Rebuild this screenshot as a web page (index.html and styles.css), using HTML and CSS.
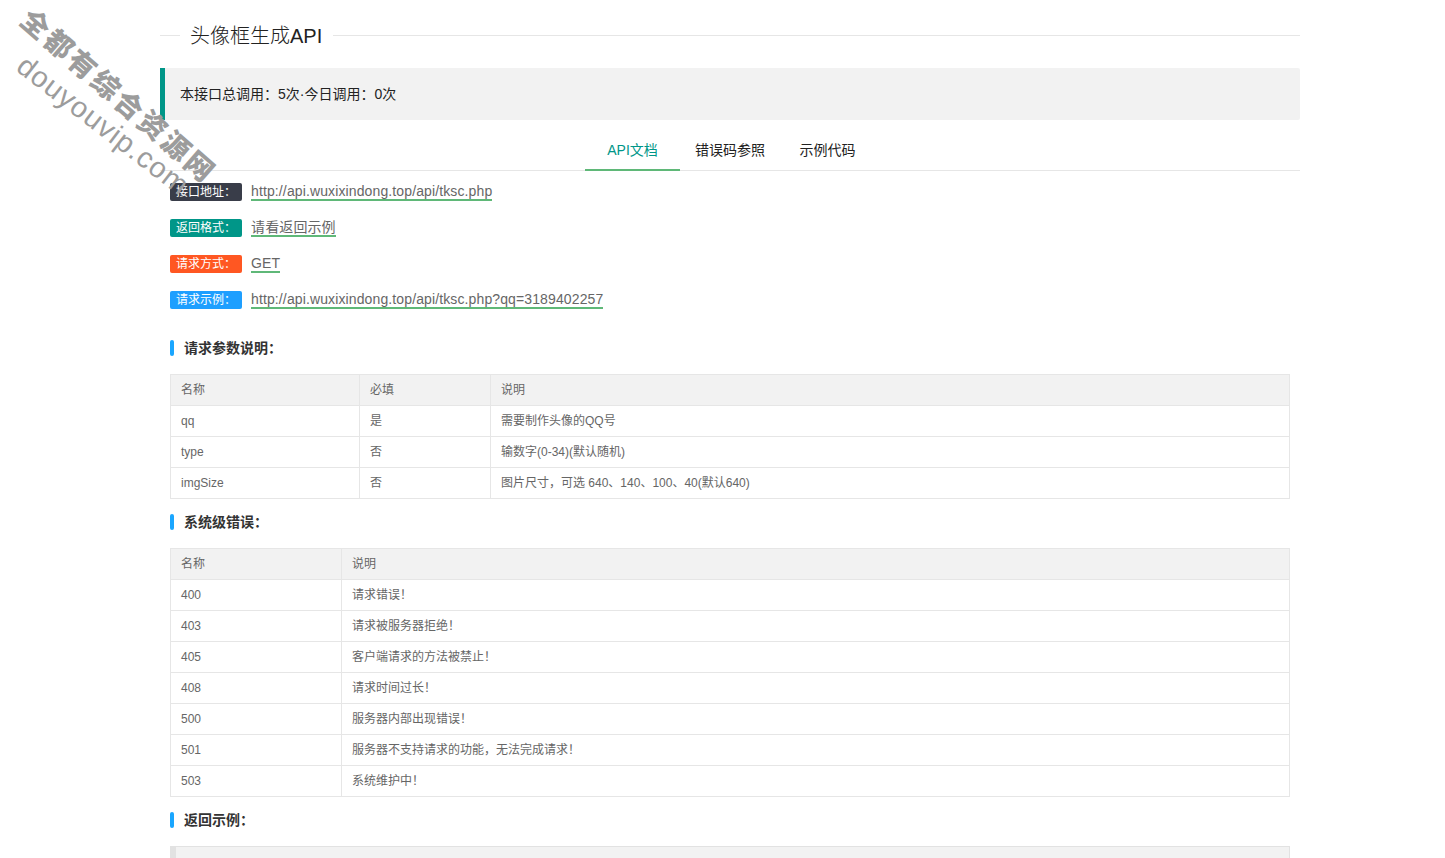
FILE: index.html
```html
<!DOCTYPE html>
<html lang="zh-CN">
<head>
<meta charset="utf-8">
<title>头像框生成API</title>
<link rel="stylesheet" href="styles.css">
</head>
<body>
<div class="watermark wm-cn">全都有综合资源网</div>
<div class="watermark wm-en">douyouvip.com</div>

<div class="container">
  <div class="field-title"><span class="field-legend">头像框生成API</span></div>

  <blockquote class="quote">本接口总调用：5次·今日调用：0次</blockquote>

  <div class="tab">
    <ul class="tab-title">
      <li class="tab-item active">API文档</li>
      <li class="tab-item">错误码参照</li>
      <li class="tab-item">示例代码</li>
    </ul>
    <div class="tab-content">
      <div class="info-list">
        <div class="info-row"><span class="badge bg-black">接口地址：</span><a class="link">http://api.wuxixindong.top/api/tksc.php</a></div>
        <div class="info-row"><span class="badge bg-teal">返回格式：</span><a class="link">请看返回示例</a></div>
        <div class="info-row"><span class="badge bg-orange">请求方式：</span><a class="link">GET</a></div>
        <div class="info-row"><span class="badge bg-blue">请求示例：</span><a class="link">http://api.wuxixindong.top/api/tksc.php?qq=3189402257</a></div>
      </div>

      <h3 class="section first">请求参数说明：</h3>
      <table class="table">
        <colgroup><col class="c-name1"><col class="c-req"><col></colgroup>
        <thead>
          <tr><th>名称</th><th>必填</th><th>说明</th></tr>
        </thead>
        <tbody>
          <tr><td>qq</td><td>是</td><td>需要制作头像的QQ号</td></tr>
          <tr><td>type</td><td>否</td><td>输数字(0-34)(默认随机)</td></tr>
          <tr><td>imgSize</td><td>否</td><td>图片尺寸，可选 640、140、100、40(默认640)</td></tr>
        </tbody>
      </table>

      <h3 class="section">系统级错误：</h3>
      <table class="table">
        <colgroup><col class="c-name2"><col></colgroup>
        <thead>
          <tr><th>名称</th><th>说明</th></tr>
        </thead>
        <tbody>
          <tr><td>400</td><td>请求错误！</td></tr>
          <tr><td>403</td><td>请求被服务器拒绝！</td></tr>
          <tr><td>405</td><td>客户端请求的方法被禁止！</td></tr>
          <tr><td>408</td><td>请求时间过长！</td></tr>
          <tr><td>500</td><td>服务器内部出现错误！</td></tr>
          <tr><td>501</td><td>服务器不支持请求的功能，无法完成请求！</td></tr>
          <tr><td>503</td><td>系统维护中！</td></tr>
        </tbody>
      </table>

      <h3 class="section">返回示例：</h3>
      <pre class="code"></pre>
    </div>
  </div>
</div>
</body>
</html>
```

FILE: styles.css
```css
html, body {
  margin: 0;
  padding: 0;
  background: #fff;
}
body {
  font-family: "Liberation Sans", Arial, "Noto Sans CJK SC", sans-serif;
  font-size: 14px;
  color: #333;
  overflow: hidden;
  height: 858px;
}

.container {
  width: 1140px;
  margin-left: 160px;
}

/* fieldset-like title */
.field-title {
  display: flex;
  align-items: center;
  height: 31px;
  margin-top: 20px;
}
.field-title::before {
  content: "";
  width: 20px;
  height: 1px;
  background: #e6e6e6;
}
.field-title::after {
  content: "";
  flex: 1;
  height: 1px;
  background: #e6e6e6;
}
.field-legend {
  padding: 0 11px 0 10px;
  font-size: 20px;
  font-weight: 300;
  line-height: 30px;
  color: #222;
}

/* quote */
.quote {
  margin: 17px 0 10px;
  padding: 15px;
  line-height: 22px;
  border-left: 5px solid #009688;
  border-radius: 0 2px 2px 0;
  background: #f2f2f2;
  color: #222;
}

/* tabs */
.tab {
  margin: 10px 0 0;
}
.tab-title {
  display: flex;
  justify-content: center;
  height: 40px;
  margin: 0;
  padding: 0;
  list-style: none;
  border-bottom: 1px solid #e6e6e6;
}
.tab-item {
  position: relative;
  min-width: 65px;
  padding: 0 15px;
  line-height: 40px;
  text-align: center;
  color: #222;
  white-space: nowrap;
}
.tab-item.active {
  color: #009688;
}
.tab-item.active::after {
  content: "";
  position: absolute;
  left: 0;
  right: 0;
  bottom: -1px;
  height: 2px;
  background: #5fb878;
}

.tab-content {
  padding: 12px 10px 0;
}

/* info rows */
.info-list {
  display: flex;
  flex-direction: column;
  gap: 18px;
}
.info-row {
  display: flex;
  align-items: center;
  gap: 9px;
  height: 18px;
}
.badge {
  height: 18px;
  line-height: 18px;
  padding: 0 6px;
  font-size: 12px;
  color: #fff;
  border-radius: 2px;
  white-space: nowrap;
}
.bg-black { background: #393d49; }
.bg-teal { background: #009688; }
.bg-orange { background: #ff5722; }
.bg-blue { background: #1e9fff; }

.link {
  display: inline-block;
  line-height: 16px;
  color: #666;
  letter-spacing: 0.12px;
  border-bottom: 2px solid #5fb878;
  white-space: nowrap;
}

/* section titles */
.section {
  display: flex;
  align-items: center;
  gap: 10px;
  height: 16px;
  margin: 15px 0 0;
  font-size: 14px;
  font-weight: bold;
  line-height: 16px;
  color: #333;
}
.section.first {
  margin-top: 31px;
}
.section::before {
  content: "";
  width: 4px;
  height: 16px;
  border-radius: 2px;
  background: #1aa6ff;
}

/* tables */
.table {
  width: 1120px;
  margin-top: 18px;
  border-collapse: collapse;
  table-layout: fixed;
  color: #666;
  font-size: 12px;
}
.table th,
.table td {
  padding: 5px 10px;
  line-height: 20px;
  border: 1px solid #e6e6e6;
  text-align: left;
  font-weight: normal;
  white-space: nowrap;
}
.table thead tr {
  background: #f2f2f2;
}
.c-name1 { width: 189px; }
.c-req { width: 131px; }
.c-name2 { width: 171px; }

/* code block */
.code {
  margin: 18px 0 0;
  width: 1113px;
  min-height: 80px;
  padding: 0;
  background: #f2f2f2;
  border: 1px solid #e2e2e2;
  border-left-width: 6px;
  font-family: "Liberation Mono", monospace;
  font-size: 12px;
}

/* watermark overlay */
.watermark {
  position: absolute;
  transform-origin: left top;
  white-space: nowrap;
  color: #9c9c9c;
  pointer-events: none;
}
.wm-cn {
  left: 36px;
  top: 2px;
  transform: rotate(41deg);
  font-family: "Noto Sans CJK SC", sans-serif;
  font-size: 28px;
  font-weight: 900;
  letter-spacing: 3px;
  line-height: 30px;
}
.wm-en {
  left: 30px;
  top: 50px;
  transform: rotate(37.5deg);
  font-family: "Liberation Sans", Arial, sans-serif;
  font-size: 29px;
  letter-spacing: 1px;
  line-height: 30px;
}
```
